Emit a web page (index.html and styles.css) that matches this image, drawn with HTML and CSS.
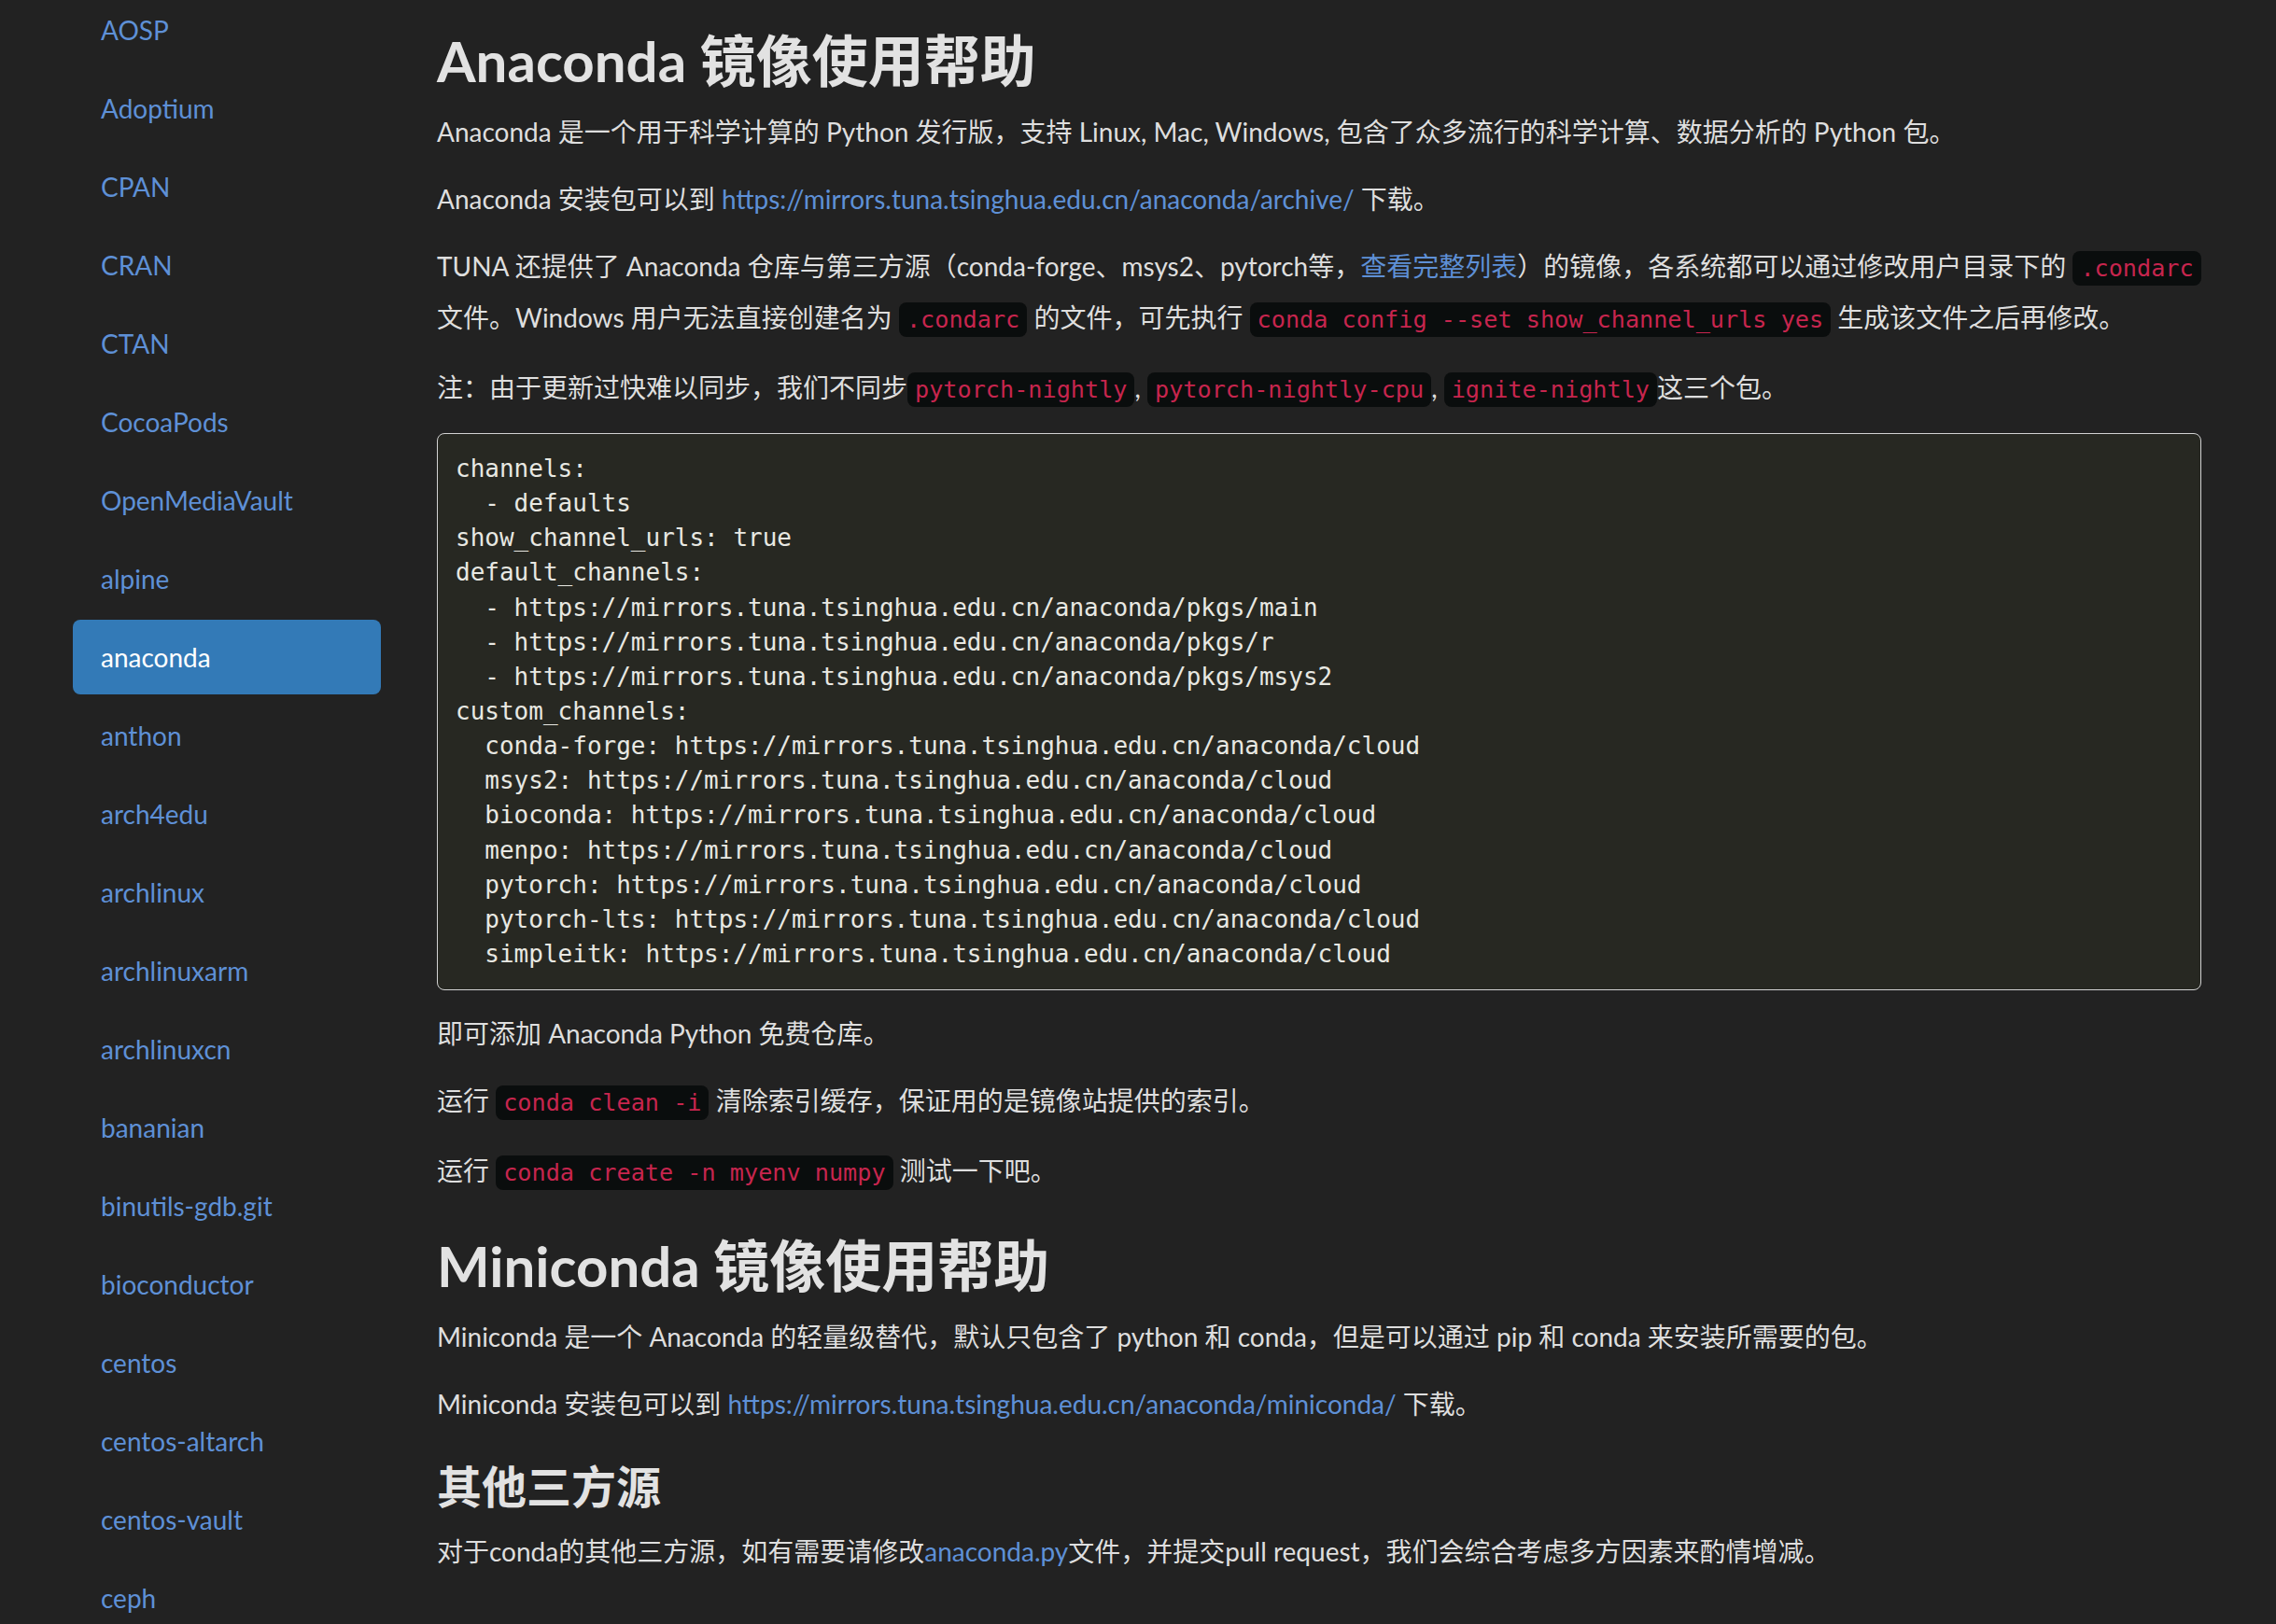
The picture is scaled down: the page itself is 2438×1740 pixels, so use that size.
FILE: index.html
```html
<!DOCTYPE html>
<html lang="zh-CN">
<head>
<meta charset="utf-8">
<title>Anaconda 镜像使用帮助</title>
<link rel="stylesheet" href="styles.css">
</head>
<body>
<div class="page">
  <aside class="sidebar">
    <ul class="nav">
      <li><a href="#">AOSP</a></li>
      <li><a href="#">Adoptium</a></li>
      <li><a href="#">CPAN</a></li>
      <li><a href="#">CRAN</a></li>
      <li><a href="#">CTAN</a></li>
      <li><a href="#">CocoaPods</a></li>
      <li><a href="#">OpenMediaVault</a></li>
      <li><a href="#">alpine</a></li>
      <li class="active"><a href="#">anaconda</a></li>
      <li><a href="#">anthon</a></li>
      <li><a href="#">arch4edu</a></li>
      <li><a href="#">archlinux</a></li>
      <li><a href="#">archlinuxarm</a></li>
      <li><a href="#">archlinuxcn</a></li>
      <li><a href="#">bananian</a></li>
      <li><a href="#">binutils-gdb.git</a></li>
      <li><a href="#">bioconductor</a></li>
      <li><a href="#">centos</a></li>
      <li><a href="#">centos-altarch</a></li>
      <li><a href="#">centos-vault</a></li>
      <li><a href="#">ceph</a></li>
    </ul>
  </aside>
  <main class="content">
    <h2>Anaconda 镜像使用帮助</h2>
    <p>Anaconda 是一个用于科学计算的 Python 发行版，支持 Linux, Mac, Windows, 包含了众多流行的科学计算、数据分析的 Python 包。</p>
    <p>Anaconda 安装包可以到 <a href="#">https://mirrors.tuna.tsinghua.edu.cn/anaconda/archive/</a> 下载。</p>
    <p>TUNA 还提供了 Anaconda 仓库与第三方源（conda-forge、msys2、pytorch等，<a href="#">查看完整列表</a>）的镜像，各系统都可以通过修改用户目录下的 <code>.condarc</code> 文件。Windows 用户无法直接创建名为 <code>.condarc</code> 的文件，可先执行 <code>conda config --set show_channel_urls yes</code> 生成该文件之后再修改。</p>
    <p>注：由于更新过快难以同步，我们不同步<code>pytorch-nightly</code>, <code>pytorch-nightly-cpu</code>, <code>ignite-nightly</code>这三个包。</p>
<pre class="codeblock">channels:
  - defaults
show_channel_urls: true
default_channels:
  - https://mirrors.tuna.tsinghua.edu.cn/anaconda/pkgs/main
  - https://mirrors.tuna.tsinghua.edu.cn/anaconda/pkgs/r
  - https://mirrors.tuna.tsinghua.edu.cn/anaconda/pkgs/msys2
custom_channels:
  conda-forge: https://mirrors.tuna.tsinghua.edu.cn/anaconda/cloud
  msys2: https://mirrors.tuna.tsinghua.edu.cn/anaconda/cloud
  bioconda: https://mirrors.tuna.tsinghua.edu.cn/anaconda/cloud
  menpo: https://mirrors.tuna.tsinghua.edu.cn/anaconda/cloud
  pytorch: https://mirrors.tuna.tsinghua.edu.cn/anaconda/cloud
  pytorch-lts: https://mirrors.tuna.tsinghua.edu.cn/anaconda/cloud
  simpleitk: https://mirrors.tuna.tsinghua.edu.cn/anaconda/cloud</pre>
    <p>即可添加 Anaconda Python 免费仓库。</p>
    <p>运行 <code>conda clean -i</code> 清除索引缓存，保证用的是镜像站提供的索引。</p>
    <p>运行 <code>conda create -n myenv numpy</code> 测试一下吧。</p>
    <h2>Miniconda 镜像使用帮助</h2>
    <p>Miniconda 是一个 Anaconda 的轻量级替代，默认只包含了 python 和 conda，但是可以通过 pip 和 conda 来安装所需要的包。</p>
    <p>Miniconda 安装包可以到 <a href="#">https://mirrors.tuna.tsinghua.edu.cn/anaconda/miniconda/</a> 下载。</p>
    <h3>其他三方源</h3>
    <p>对于conda的其他三方源，如有需要请修改<a href="#">anaconda.py</a>文件，并提交pull request，我们会综合考虑多方因素来酌情增减。</p>
  </main>
</div>
</body>
</html>
```

FILE: styles.css
```css
html, body {
  margin: 0;
  padding: 0;
  background: #222222;
}

body {
  font-family: Lato, "Noto Sans CJK SC", sans-serif;
  font-size: 28px;
  line-height: 40px;
  color: #dedede;
  overflow: hidden;
  height: 1740px;
}

a {
  color: #5e90d6;
  text-decoration: none;
}

.page {
  display: flex;
  gap: 60px;
  margin-top: -8px;
  padding-left: 78px;
}

.sidebar {
  flex: none;
  width: 330px;
}

.nav {
  list-style: none;
  margin: 0;
  padding: 0;
  display: flex;
  flex-direction: column;
  gap: 4px;
}

.nav a {
  display: block;
  padding: 20px 30px;
  line-height: 40px;
  border-radius: 8px;
  color: #5e90d6;
}

.nav .active a {
  background: #337ab7;
  color: #ffffff;
}

.content {
  flex: none;
  width: 1890px;
}

.content h2 {
  font-size: 60px;
  line-height: 66px;
  font-weight: 700;
  margin: 40px 0 17px;
  color: #e2e2e2;
}

.content h3 {
  font-size: 48px;
  line-height: 52px;
  font-weight: 700;
  margin: 37px 0 17px;
  color: #e2e2e2;
}

.content p {
  margin: 0 0 20px;
  line-height: 52px;
}

code {
  font-family: "DejaVu Sans Mono", monospace;
  font-size: 25.2px;
  padding: 4px 8px;
  color: #c7254e;
  background: #0a0d0d;
  border-radius: 8px;
}

.codeblock {
  font-family: "DejaVu Sans Mono", monospace;
  font-size: 26px;
  line-height: 37.14px;
  margin: 1px 0 20px;
  padding: 19px;
  border: 1px solid #d2d2d2;
  border-radius: 8px;
  background: #272822;
  color: #e8e8e2;
  white-space: pre;
}
```
